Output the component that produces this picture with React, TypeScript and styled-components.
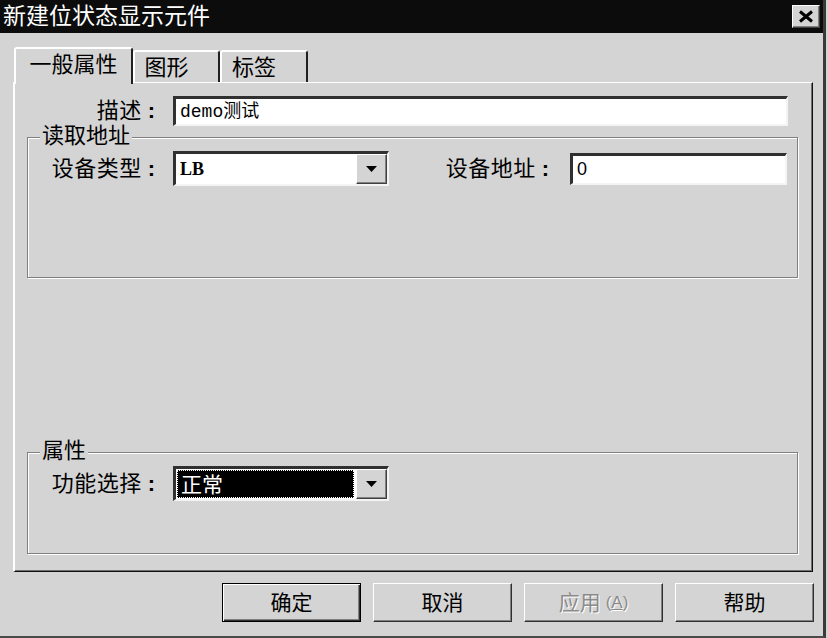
import React from "react";
import styled, { createGlobalStyle, css } from "styled-components";

const FACE = "#d4d4d4";

const GlobalStyle = createGlobalStyle`
  html, body { margin: 0; padding: 0; background: ${FACE}; }
  body { font-family: "Liberation Sans", "Noto Sans CJK SC", sans-serif; color: #000; }
  * { box-sizing: border-box; }
`;

const Window = styled.div`
  width: 826px;
  height: 638px;
  background: ${FACE};
  border-right: 3px solid #3a3a3a;
  border-bottom: 2px solid #4a4a4a;
  display: flex;
  flex-direction: column;
`;

const TitleBar = styled.div`
  height: 33px;
  flex-shrink: 0;
  background: #0c0c0c;
  color: #fff;
  display: flex;
  align-items: center;
  justify-content: space-between;
  padding: 0 3px 0 3px;
  font-size: 23px;
  line-height: 1;
`;

const CloseButton = styled.div`
  width: 28px;
  height: 23px;
  background: ${FACE};
  border: 1px solid;
  border-color: #fff #404040 #404040 #fff;
  box-shadow: inset -1px -1px 0 #808080;
  display: flex;
  align-items: center;
  justify-content: center;
`;

const Body = styled.div`
  flex: 1;
  display: flex;
  flex-direction: column;
  padding: 14px 10px 14px 13px;
`;

const TabStrip = styled.div`
  height: 35px;
  display: flex;
  align-items: flex-end;
  padding-left: 1px;
  position: relative;
  z-index: 1;
`;

const Tab = styled.div<{ $active?: boolean; $w: number }>`
  width: ${(p) => p.$w}px;
  height: 32px;
  background: ${FACE};
  border-top: 2px solid #fff;
  border-left: 2px solid #fff;
  border-right: 2px solid #202020;
  border-radius: 3px 3px 0 0;
  display: flex;
  align-items: center;
  justify-content: center;
  padding: 2px 20px 0 0;
  font-size: 22px;
  line-height: 1;
  ${(p) =>
    p.$active &&
    css`
      height: 37px;
      margin-bottom: -2px;
      padding: 0 0 4px 0;
    `}
`;

const Panel = styled.div`
  width: 800px;
  height: 490px;
  border-top: 1px solid #fff;
  border-left: 2px solid #fff;
  border-right: 1px solid #101010;
  border-bottom: 1px solid #101010;
  box-shadow: inset -1px -1px 0 #707070;
  display: flex;
  flex-direction: column;
  padding: 13px 14px 17px 12px;
`;

const Row = styled.div<{ $h: number; $mr?: number }>`
  display: flex;
  align-items: center;
  gap: 13px;
  height: ${(p) => p.$h}px;
  margin-right: ${(p) => p.$mr ?? 0}px;
`;

const FieldLabel = styled.div<{ $w?: number }>`
  ${(p) =>
    p.$w
      ? css`
          width: ${p.$w}px;
          flex-shrink: 0;
        `
      : css`
          flex: 1;
          margin-right: 3px;
        `}
  text-align: right;
  font-size: 22px;
  letter-spacing: 0.5px;
  line-height: 1;
  white-space: nowrap;
`;

const Colon = styled.span`
  font-family: "Liberation Sans", sans-serif;
  font-weight: bold;
  letter-spacing: 0;
  padding: 0 5px 0 6px;
`;

const Sunken = styled.div<{ $w?: number; $h: number }>`
  ${(p) =>
    p.$w
      ? css`
          width: ${p.$w}px;
          flex-shrink: 0;
        `
      : css`
          flex: 1;
        `}
  height: ${(p) => p.$h}px;
  background: #fff;
  border-style: solid;
  border-width: 3px 2px 2px 3px;
  border-color: #303030 #f4f4f4 #f4f4f4 #303030;
  display: flex;
  align-items: stretch;
`;

const FieldText = styled.div<{ $font?: string; $bold?: boolean }>`
  flex: 1;
  display: flex;
  align-items: center;
  padding-left: 4px;
  font-size: 18px;
  line-height: 1;
  font-weight: ${(p) => (p.$bold ? "bold" : "normal")};
  font-family: ${(p) => p.$font ?? `"Liberation Sans", "Noto Sans CJK SC", sans-serif`};
`;

const FocusText = styled.div`
  flex: 1;
  margin: 1px 2px 1px 1px;
  background: #000;
  color: #fff;
  border: 1px dotted #fff;
  display: flex;
  align-items: center;
  padding-left: 3px;
  font-size: 21px;
  line-height: 1;
`;

const DropButton = styled.div`
  width: 31px;
  flex-shrink: 0;
  background: ${FACE};
  border: 1px solid;
  border-color: #fff #404040 #404040 #fff;
  box-shadow: inset -1px -1px 0 #808080;
  display: flex;
  align-items: center;
  justify-content: center;
`;

const Group = styled.div<{ $h: number; $mt?: number; $auto?: boolean }>`
  position: relative;
  height: ${(p) => p.$h}px;
  margin-top: ${(p) => (p.$auto ? "auto" : `${p.$mt ?? 0}px`)};
  border: 1px solid #808080;
  box-shadow: inset 1px 1px 0 #fff, 1px 1px 0 #fff;
  padding: 13px 10px 0 0;
`;

const Caption = styled.div`
  position: absolute;
  top: -14px;
  left: 12px;
  padding: 0 2px;
  background: ${FACE};
  font-size: 22px;
  line-height: 24px;
`;

const ButtonRow = styled.div`
  display: flex;
  justify-content: flex-end;
  gap: 12px;
  margin-top: 11px;
  margin-right: -1px;
`;

const Button = styled.div<{ $default?: boolean; $disabled?: boolean }>`
  width: 139px;
  height: 39px;
  background: ${FACE};
  display: flex;
  align-items: center;
  justify-content: center;
  font-size: 21px;
  line-height: 1;
  border: 1px solid;
  border-color: #fff #303030 #303030 #fff;
  box-shadow: inset -1px -1px 0 #808080;
  ${(p) =>
    p.$default &&
    css`
      border-color: #000;
      box-shadow: inset 1px 1px 0 #fff, inset -1px -1px 0 #303030, inset -2px -2px 0 #808080;
    `}
  ${(p) =>
    p.$disabled &&
    css`
      color: #8a8a8a;
      text-shadow: 1px 1px 0 #fff;
    `}
`;

const Hotkey = styled.span`
  font-size: 17px;
  margin-left: 5px;
  & u {
    text-decoration-thickness: 1px;
  }
`;

const Arrow = () => (
  <svg width="11" height="6" viewBox="0 0 11 6">
    <polygon points="0,0 11,0 5.5,6" fill="#000" />
  </svg>
);

const CloseGlyph = () => (
  <svg width="16" height="13" viewBox="0 0 16 13">
    <path d="M2 1.5 L14 11.5 M14 1.5 L2 11.5" stroke="#000" strokeWidth="3" />
  </svg>
);

const Combo = ({
  value,
  focused,
  font,
  bold,
}: {
  value: string;
  focused?: boolean;
  font?: string;
  bold?: boolean;
}) => (
  <Sunken $w={216} $h={35}>
    {focused ? (
      <FocusText>{value}</FocusText>
    ) : (
      <FieldText $font={font} $bold={bold}>
        {value}
      </FieldText>
    )}
    <DropButton>
      <Arrow />
    </DropButton>
  </Sunken>
);

export default function App() {
  return (
    <>
      <GlobalStyle />
      <Window>
        <TitleBar>
          <span>新建位状态显示元件</span>
          <CloseButton>
            <CloseGlyph />
          </CloseButton>
        </TitleBar>
        <Body>
          <TabStrip>
            <Tab $active $w={119}>一般属性</Tab>
            <Tab $w={87}>图形</Tab>
            <Tab $w={88}>标签</Tab>
          </TabStrip>
          <Panel>
            <Row $h={30} $mr={10}>
              <FieldLabel $w={133}>
                描述<Colon>:</Colon>
              </FieldLabel>
              <Sunken $h={30}>
                <FieldText $font={`"Liberation Mono", "Noto Sans CJK SC", monospace`}>demo测试</FieldText>
              </Sunken>
            </Row>
            <Group $h={141} $mt={11}>
              <Caption>读取地址</Caption>
              <Row $h={35}>
                <FieldLabel $w={132}>
                  设备类型<Colon>:</Colon>
                </FieldLabel>
                <Combo value="LB" font={`"Liberation Serif", serif`} bold />
                <FieldLabel>
                  设备地址<Colon>:</Colon>
                </FieldLabel>
                <Sunken $w={217} $h={32}>
                  <FieldText>0</FieldText>
                </Sunken>
              </Row>
            </Group>
            <Group $h={102} $auto>
              <Caption>属性</Caption>
              <Row $h={35}>
                <FieldLabel $w={132}>
                  功能选择<Colon>:</Colon>
                </FieldLabel>
                <Combo value="正常" focused />
              </Row>
            </Group>
          </Panel>
          <ButtonRow>
            <Button $default>确定</Button>
            <Button>取消</Button>
            <Button $disabled>
              应用
              <Hotkey>
                (<u>A</u>)
              </Hotkey>
            </Button>
            <Button>帮助</Button>
          </ButtonRow>
        </Body>
      </Window>
    </>
  );
}
